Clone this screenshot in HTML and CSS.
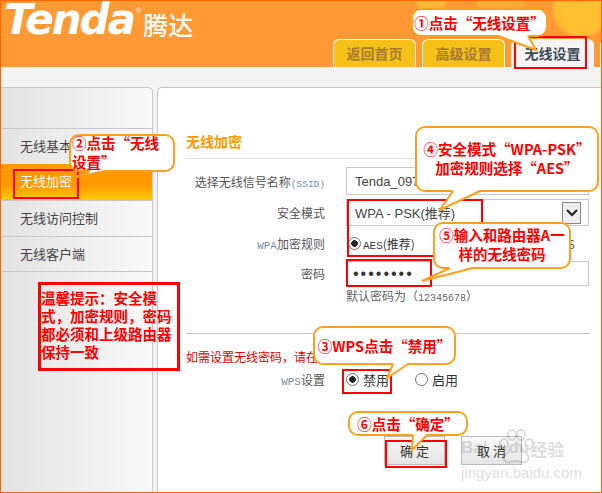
FILE: index.html
```html
<!DOCTYPE html>
<html lang="zh-CN">
<head>
    <meta charset="UTF-8">
    <meta name="viewport" content="width=device-width, initial-scale=1.0">
    <title>无线加密</title>
    <link rel="stylesheet" href="styles.css">
</head>
<body>
    <div class="page">
        <div class="header">
            <div class="logo">
                <span class="logo-en">Tenda</span><span class="logo-reg">®</span>
                <span class="logo-cn">腾达</span>
            </div>
            <div class="tabs">
                <div class="tab">返回首页</div>
                <div class="tab">高级设置</div>
                <div class="tab tab-on">无线设置</div>
                <div class="tab tab-stub"></div>
            </div>
        </div>

        <div class="content">
            <div class="sidebar">
                <div class="side-head"></div>
                <div class="side-item">无线基本设置</div>
                <div class="side-item side-on">无线加密</div>
                <div class="side-item">无线访问控制</div>
                <div class="side-item">无线客户端</div>
            </div>

            <div class="main">
                <h3 class="title">无线加密</h3>

                <div class="row row-ssid">
                    <label class="label">选择无线信号名称<span class="mono mono-sm blue">(SSID)</span></label>
                    <div class="box">Tenda_097</div>
                </div>
                <div class="row row-mode">
                    <label class="label">安全模式</label>
                    <div class="box box-select">
                        <span>WPA - PSK(推荐)</span>
                        <span class="arrow">
                            <svg width="12" height="8" viewBox="0 0 12 8"><path d="M1 1 L6 6 L11 1" fill="none" stroke="#222" stroke-width="2"/></svg>
                        </span>
                    </div>
                </div>
                <div class="row row-rule">
                    <label class="label"><span class="mono blue">WPA</span>加密规则</label>
                    <div class="radios rule-radios">
                        <span class="radio radio-on"></span><span><span class="mono">AES</span>(推荐)</span>
                        <span class="radio-end">TKIP&amp;AES</span>
                    </div>
                </div>
                <div class="row row-pass">
                    <label class="label">密码</label>
                    <div class="box box-pass">••••••••</div>
                </div>
                <div class="row row-hint">
                    <span class="label"></span>
                    <span class="hint">默认密码为（<span class="mono mono-num">12345678</span>）</span>
                </div>

                <div class="note">如需设置无线密码，请在此页面设置。</div>

                <div class="row row-wps">
                    <label class="label"><span class="mono blue">WPS</span>设置</label>
                    <div class="radios wps-radios">
                        <span class="radio radio-on"></span><span>禁用</span>
                        <span class="radio radio-gap"></span><span>启用</span>
                    </div>
                </div>

                <div class="buttons">
                    <div class="btn">确 定</div>
                    <div class="btn">取 消</div>
                </div>
            </div>
        </div>

        <!-- 红框标注 -->
        <div class="mark mark-tab"></div>
        <div class="mark mark-side"></div>
        <div class="mark mark-mode"></div>
        <div class="mark mark-pass"></div>
        <div class="mark mark-wps"></div>
        <div class="mark mark-ok"></div>
        <div class="mark mark-tip">温馨提示：安全模式，加密规则，密码都必须和上级路由器保持一致</div>

        <!-- 气泡 -->
        <div class="callout c1">①点击“无线设置”</div>
        <div class="callout c2">②点击“无线设置”</div>
        <div class="callout c3">③WPS点击“禁用”</div>
        <div class="callout c4">④安全模式“WPA-PSK”<br>加密规则选择“AES”</div>
        <div class="callout c5">⑤输入和路由器A一<br>样的无线密码</div>
        <div class="callout c6">⑥点击“确定”</div>

        <svg class="tails" width="602" height="493" viewBox="0 0 602 493">
            <g class="tail"><polygon points="498,35 528,35 536,50"/><polyline points="498,36 536,50 528,36"/></g>
            <g class="tail"><polygon points="90,170 105,170 76,177"/><polyline points="90,171 76,177 105,171"/></g>
            <g class="tail"><polygon points="393,363 408,363 387,378"/><polyline points="393,364 387,378 408,364"/></g>
            <g class="tail"><polygon points="453,190 480,190 440,210"/><polyline points="453,191 440,210 480,191"/></g>
            <g class="tail"><polygon points="450,267 473,267 422,281"/><polyline points="450,268 422,281 473,268"/></g>
            <g class="tail"><polygon points="413,434 427,434 412,450"/><polyline points="413,435 412,450 427,435"/></g>
        </svg>

        <div class="watermark">
            <svg class="wm-paw" width="36" height="36" viewBox="0 0 36 36">
                <g fill="none" stroke="#000" stroke-width="2">
                    <ellipse cx="6" cy="15" rx="4" ry="5"/>
                    <ellipse cx="14" cy="6" rx="4" ry="5"/>
                    <ellipse cx="23" cy="6" rx="4" ry="5"/>
                    <ellipse cx="31" cy="15" rx="4" ry="5"/>
                    <path d="M18 15 C24 15 24 22 29 25 C33 29 29 35 24 33 C20 32 16 32 12 33 C7 35 3 29 8 25 C13 22 12 15 18 15 Z"/>
                </g>
            </svg>
            <div class="wm-top"><span class="wm-bai">Bai</span><span class="wm-du">du</span><span class="wm-cn">经验</span></div>
            <div class="wm-url">jingyan.baidu.com</div>
        </div>
    </div>
</body>
</html>
```

FILE: styles.css
```css
html, body {
    margin: 0;
    padding: 0;
    background: #fff;
}

.page {
    position: relative;
    width: 602px;
    height: 493px;
    box-sizing: border-box;
    border: 1px solid #ff6600;
    overflow: hidden;
    display: flex;
    flex-direction: column;
    font-family: "Noto Sans CJK SC", "Liberation Sans", sans-serif;
    font-size: 12px;
    color: #555;
}

.mono {
    font-family: "Liberation Mono", monospace;
    font-size: 11px;
}

.mono-sm {
    font-size: 9.5px;
}

.mono-num {
    font-size: 10px;
}

.blue {
    color: #7d8ea3;
}

/* 顶部 */
.header {
    height: 66px;
    flex: none;
    display: flex;
    justify-content: space-between;
    align-items: flex-end;
    background:
        radial-gradient(circle at 580px 8px, #ffc233 0, #ffbe30 26px, rgba(255, 190, 48, 0) 30px),
        radial-gradient(circle at 430px -4px, #ffb733 0, #ffb733 14px, rgba(255, 183, 51, 0) 18px),
        radial-gradient(circle at 500px 2px, #ffab38 0, #ffab38 22px, rgba(255, 171, 56, 0) 26px),
        #ff9933;
}

.logo {
    align-self: flex-start;
    display: flex;
    align-items: flex-start;
    color: #fff;
    padding: 0 0 0 3px;
    height: 42px;
}

.logo-en {
    font-family: "DejaVu Sans", sans-serif;
    font-style: italic;
    font-weight: bold;
    font-size: 42px;
    line-height: 38px;
    letter-spacing: -2px;
}

.logo-reg {
    font-family: "Liberation Sans", sans-serif;
    font-size: 7px;
    line-height: 8px;
    margin: 6px 0 0 2px;
}

.logo-cn {
    font-size: 25px;
    line-height: 28px;
    margin: 9px 0 0 2px;
    font-weight: 500;
}

.tabs {
    display: flex;
    gap: 6px;
    margin-right: -19px;
}

.tab {
    box-sizing: border-box;
    width: 83px;
    height: 28px;
    border: 1px solid #fff;
    border-bottom: 0;
    border-radius: 6px 6px 0 0;
    background: #f5c018;
    color: #a87a30;
    font-size: 14px;
    font-weight: bold;
    line-height: 26px;
    text-align: center;
}

.tab-on {
    background: #f4f4f4;
    color: #3f4a57;
    border-color: #f4f4f4;
}

.tab-stub {
    width: 20px;
}

/* 内容 */
.content {
    flex: 1;
    display: flex;
    gap: 4px;
    padding-top: 20px;
    background: #f4f4f4;
    min-height: 0;
}

.sidebar {
    width: 152px;
    flex: none;
    box-sizing: border-box;
    border: 1px solid #c8c8c8;
    border-left: 0;
    border-bottom: 0;
    border-radius: 0 5px 0 0;
    background: linear-gradient(90deg, #e3e3e3, #f9f9f9);
}

.side-head {
    height: 40px;
}

.side-item {
    box-sizing: border-box;
    height: 36px;
    border-top: 1px solid #c8c8c8;
    padding-left: 19px;
    font-size: 13px;
    line-height: 33px;
    color: #444;
    white-space: nowrap;
    overflow: hidden;
}

.side-item:last-child {
    border-bottom: 1px solid #c8c8c8;
}

.side-on {
    border-top: 0;
    color: #fff;
    background: linear-gradient(180deg, #ff9900 0, #ff9900 60%, #ffcc00 100%);
}

.main {
    flex: 1;
    min-width: 0;
    box-sizing: border-box;
    border: 1px solid #c8c8c8;
    border-width: 1px 0 0 1px;
    border-radius: 5px 0 0 0;
    background: #fff;
    padding-left: 28px;
}

.title {
    margin: 0 11px 8px 0;
    padding-top: 41px;
    height: 24px;
    padding-bottom: 5px;
    border-bottom: 1px solid #e4e4e4;
    font-size: 14px;
    line-height: 24px;
    font-weight: bold;
    color: #ff9900;
    box-sizing: content-box;
}

.row {
    display: flex;
    align-items: center;
    gap: 21px;
}

.label {
    width: 139px;
    flex: none;
    text-align: right;
    white-space: nowrap;
}

.box {
    box-sizing: border-box;
    width: 243px;
    height: 100%;
    border: 1px solid #c8c8c8;
    padding-left: 8px;
    font-size: 13px;
    display: flex;
    align-items: center;
    color: #444;
    font-family: "Liberation Sans", "Noto Sans CJK SC", sans-serif;
}

.row-ssid {
    height: 28px;
    margin-bottom: 4px;
}

.row-mode {
    height: 27px;
}

.box-select {
    justify-content: space-between;
    padding-right: 7px;
}

.arrow {
    box-sizing: border-box;
    width: 19px;
    height: 22px;
    border: 1px solid #888;
    background: #eee;
    display: flex;
    align-items: center;
    justify-content: center;
}

.row-rule {
    height: 35px;
}

.radios {
    width: 243px;
    display: flex;
    align-items: center;
    gap: 4px;
    color: #333;
}

.rule-radios {
    padding-left: 2px;
    gap: 2px;
    box-sizing: border-box;
}

.radio {
    box-sizing: border-box;
    width: 13px;
    height: 13px;
    border: 1px solid #777;
    border-radius: 50%;
    background: #fff;
    flex: none;
}

.radio-on {
    background: radial-gradient(circle, #222 0, #222 3px, #fff 3.6px);
}

.radio-gap {
    margin-left: 22px;
}

.radio-end {
    margin-left: auto;
    margin-right: 14px;
    color: #555;
}

.row-pass {
    height: 25px;
}

.box-pass {
    padding-left: 6px;
    letter-spacing: 2px;
    color: #333;
    font-size: 16px;
}

.row-hint {
    height: 19px;
}

.hint {
    color: #666;
    white-space: nowrap;
}

.note {
    margin: 28px 11px 0 0;
    border-top: 1px solid #c8c8c8;
    padding-top: 13px;
    height: 20px;
    line-height: 20px;
    color: #e00000;
}

.row-wps {
    height: 24px;
}

.wps-radios {
    font-size: 13px;
}

.buttons {
    display: flex;
    gap: 16px;
    margin: 45px 0 0 198px;
}

.btn {
    box-sizing: border-box;
    width: 61px;
    height: 29px;
    border: 1px solid #bbb;
    background: linear-gradient(180deg, #fafafa, #e4e4e4);
    color: #333;
    font-size: 13px;
    line-height: 27px;
    text-align: center;
}

/* 标注 */
.mark {
    position: absolute;
    box-sizing: border-box;
    border: 2px solid #ff0000;
}

.mark-tab { left: 513px; top: 35px; width: 73px; height: 33px; }
.mark-side { left: 12px; top: 168px; width: 66px; height: 30px; }
.mark-mode { left: 346px; top: 198px; width: 136px; height: 58px; }
.mark-pass { left: 345px; top: 258px; width: 86px; height: 28px; }
.mark-wps { left: 341px; top: 368px; width: 50px; height: 25px; }
.mark-ok { left: 384px; top: 439px; width: 62px; height: 28px; }

.mark-tip {
    left: 37px;
    top: 281px;
    width: 142px;
    height: 89px;
    border-width: 3px;
    padding: 4px 0 0 0;
    color: #f00;
    font-size: 14.5px;
    line-height: 18px;
    font-weight: bold;
}

.callout {
    position: absolute;
    box-sizing: border-box;
    display: flex;
    align-items: center;
    justify-content: center;
    text-align: center;
    border: 2px solid #ff9f1c;
    border-radius: 10px;
    background: #fff;
    color: #f00;
    font-weight: bold;
    font-size: 14.5px;
    line-height: 19px;
    white-space: nowrap;
}

.c1 { left: 410px; top: 7px; width: 137px; height: 29px; }
.c2 { left: 68px; top: 133px; width: 106px; height: 38px; white-space: normal; text-align: left; justify-content: flex-start; padding: 0 0 2px 1px; }
.c3 { left: 312px; top: 325px; width: 143px; height: 39px; }
.c4 { left: 414px; top: 125px; width: 184px; height: 66px; padding-bottom: 2px; }
.c5 { left: 432px; top: 221px; width: 138px; height: 47px; padding-bottom: 3px; }
.c6 { left: 347px; top: 410px; width: 120px; height: 25px; }

.tails {
    position: absolute;
    left: -1px;
    top: -1px;
    pointer-events: none;
}

.tail polygon {
    fill: #fff;
}

.tail polyline {
    fill: none;
    stroke: #ff9f1c;
    stroke-width: 2;
}

.watermark {
    position: absolute;
    left: 460px;
    top: 428px;
    width: 110px;
    color: #000;
    opacity: 0.13;
    font-family: "Liberation Sans", sans-serif;
    pointer-events: none;
}

.wm-paw {
    position: absolute;
    left: 37px;
    top: 0;
}

.wm-top {
    display: flex;
    align-items: center;
    height: 36px;
    padding-top: 2px;
    font-weight: bold;
    font-size: 17px;
    box-sizing: border-box;
    white-space: nowrap;
}

.wm-du {
    margin-left: 21px;
}

.wm-cn {
    margin-left: 1px;
    font-family: "Noto Sans CJK SC", sans-serif;
    font-size: 17px;
}

.wm-url {
    font-size: 15px;
    line-height: 16px;
    white-space: nowrap;
}
```
